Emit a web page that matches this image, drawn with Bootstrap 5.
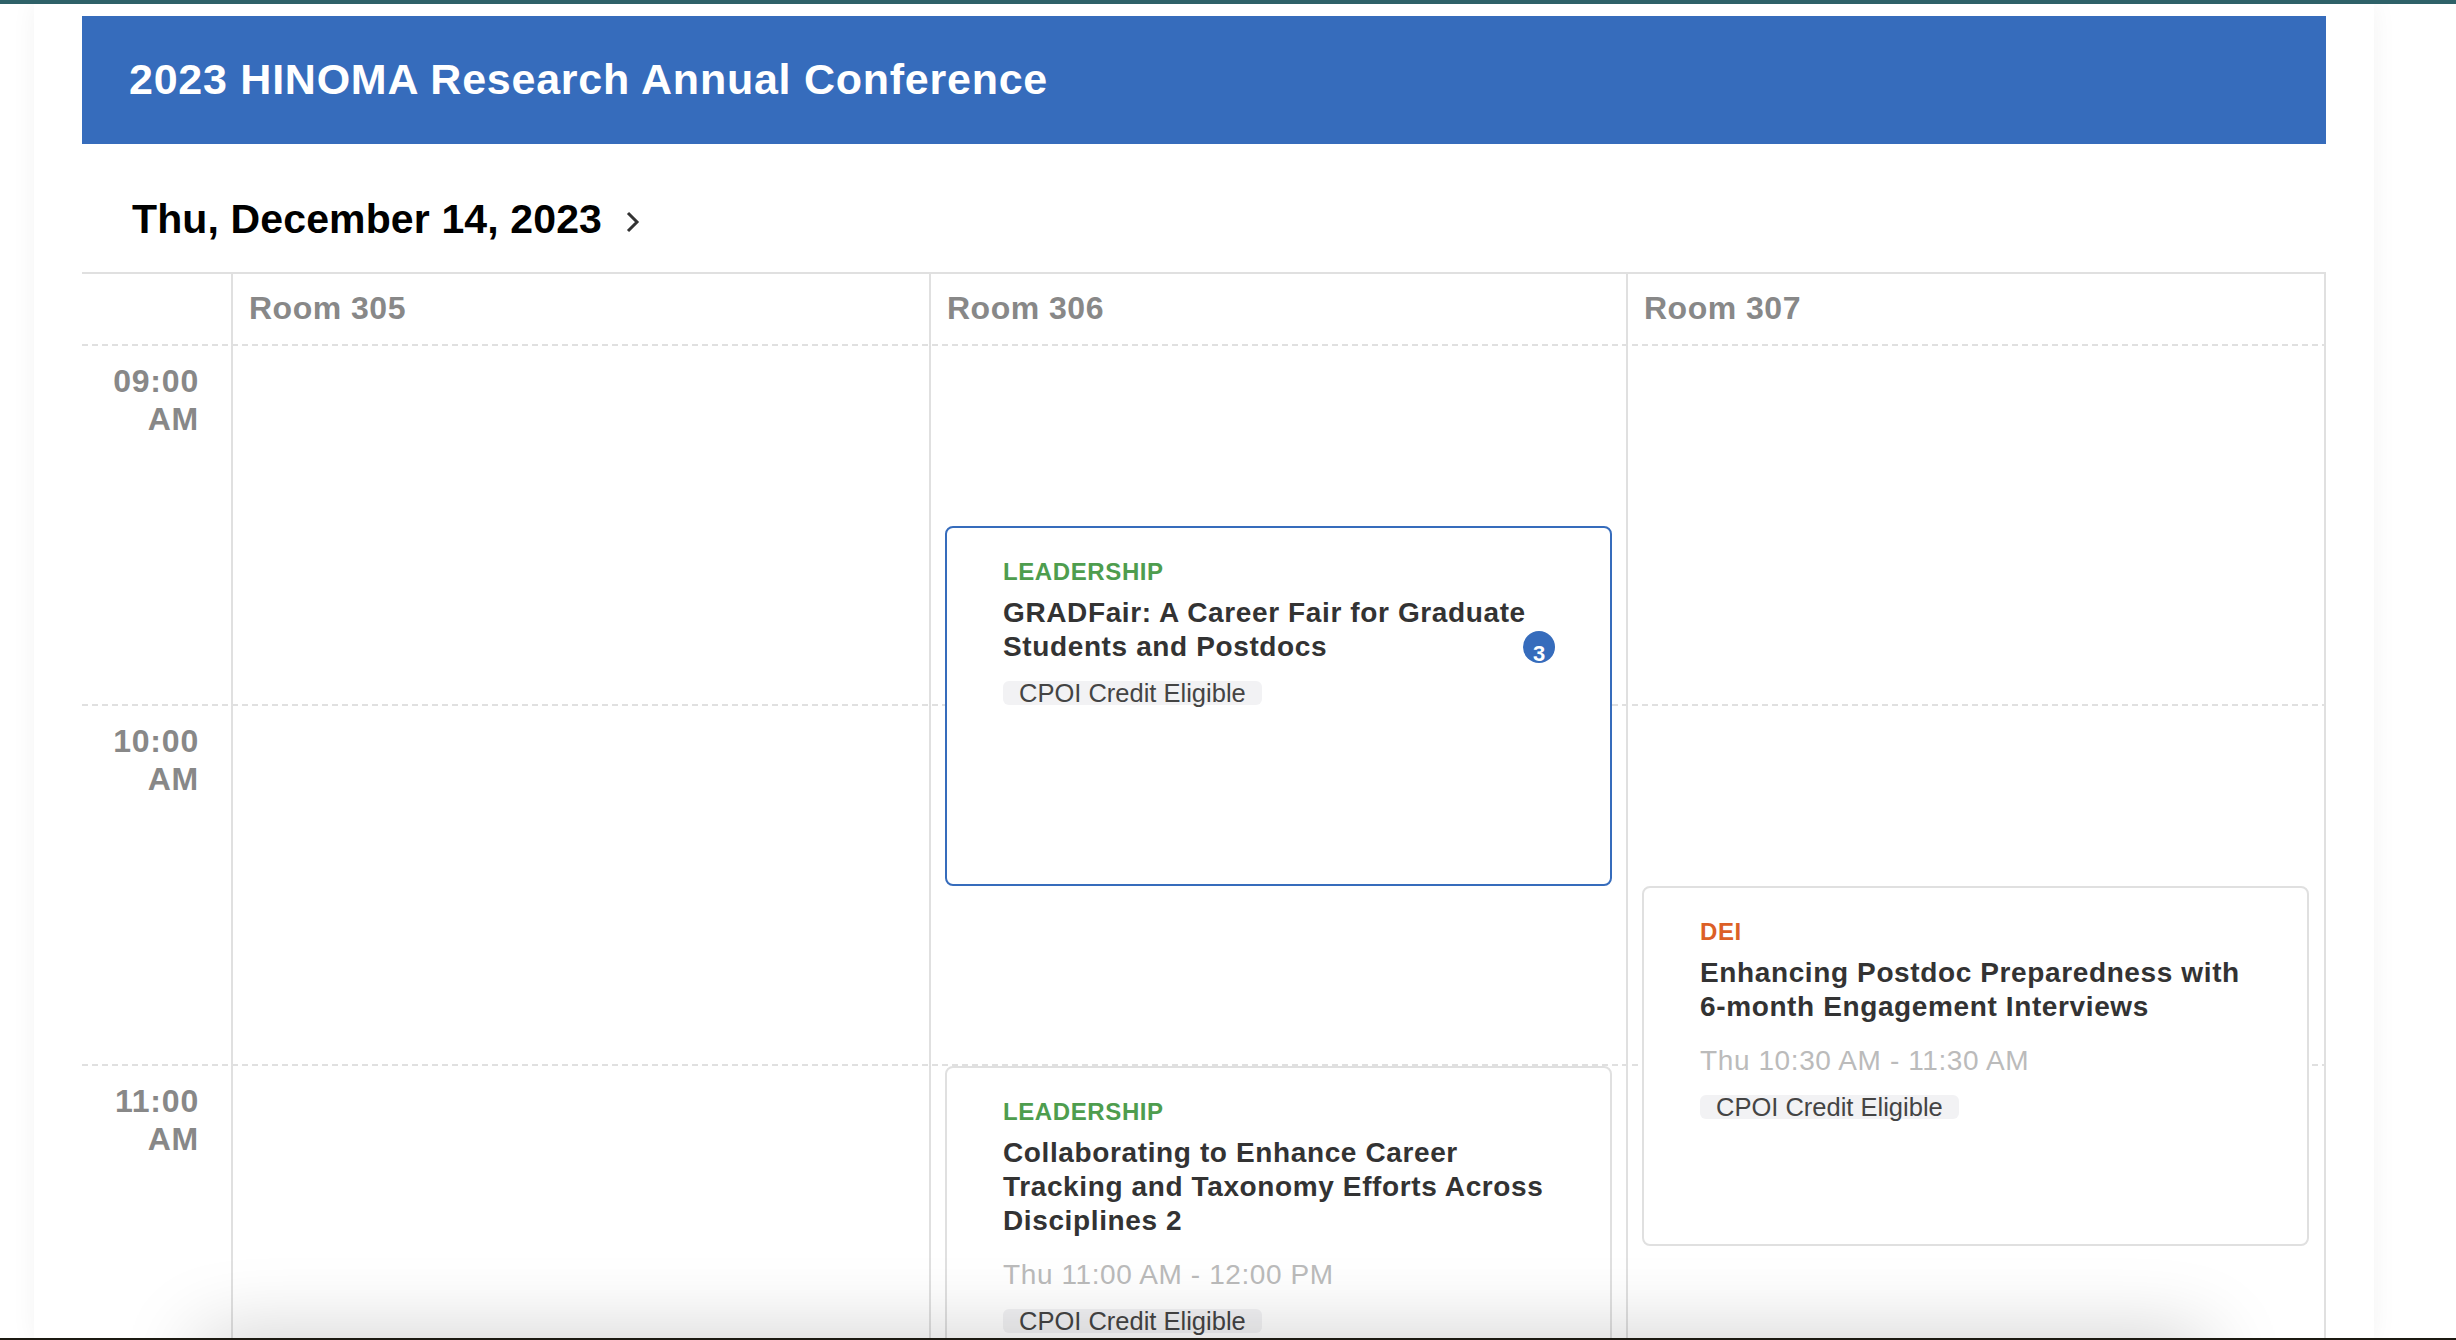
<!DOCTYPE html>
<html lang="en">
<head>
<meta charset="utf-8">
<title>2023 HINOMA Research Annual Conference</title>
<link rel="stylesheet" href="https://cdn.jsdelivr.net/npm/bootstrap@5.3.0/dist/css/bootstrap.min.css">
<style>
html,body{height:1340px;overflow:hidden;background:#fff;}
body{font-family:"Liberation Sans",Arial,sans-serif;position:relative;}
.topstrip{height:4px;background:#2e6168;position:relative;z-index:3;}
.sheet{margin:0 82px 0 34px;padding:12px 48px 0;background:#fff;box-shadow:0 0 24px rgba(0,0,0,.05);height:1336px;overflow:hidden;}
.banner{height:128px;background:#366cbc;color:#fff;padding:0 0 2px 47px;font-size:43px;font-weight:700;letter-spacing:.75px;}
.dayline{height:128px;padding:24px 0 0 50px;font-size:41px;font-weight:700;color:#000;letter-spacing:.13px;}
.dayline svg{margin-left:24px;margin-top:4px;}
.cal{display:grid;grid-template-columns:149px 698px 697px 1fr;grid-template-rows:70px repeat(6,180px);border-top:2px solid #e0e0e0;width:2244px;}
.rule{grid-column:1/-1;height:2px;background:repeating-linear-gradient(90deg,#e0e0e0 0 6px,transparent 6px 10px);align-self:start;}
.roomcol{grid-row:1/-1;border-left:2px solid #e0e0e0;}
.roomcol.endcol{border-right:2px solid #e0e0e0;}
.roomname{grid-row:1;padding:15px 0 0 18px;font-size:32px;line-height:38px;font-weight:700;color:#888;letter-spacing:.5px;}
.hourcell{grid-column:1;grid-row-end:span 2;padding:18px 32px 0 0;text-align:right;font-size:32px;line-height:38px;font-weight:700;color:#888;letter-spacing:.8px;}
.evt{position:relative;z-index:1;grid-row-end:span 2;width:667px;margin:2px 0 -2px 16px;padding:29px 56px 0;background:#fff;border:2px solid #e0e0e0;border-radius:8px;}
.evt.chosen{border-color:#366cbc;}
.evt-tag{font-size:24px;line-height:30px;font-weight:700;letter-spacing:.6px;}
.tag-green{color:#4e9d4e;}
.tag-orange{color:#dc5f26;}
.evt-title{margin-top:9px;font-size:28px;line-height:34px;font-weight:700;color:#333;letter-spacing:.62px;}
.evt-time{margin-top:20px;font-size:28px;line-height:34px;color:#bbb;letter-spacing:.6px;}
.evt-chip{display:inline-block;margin-top:17px;padding:0 16px;height:24px;line-height:24px;font-size:25.5px;color:#444;background:#f2f2f4;border-radius:6px;}
.evt-count{position:absolute;top:103px;right:55px;width:32px;height:32px;border-radius:50%;overflow:hidden;background:#366cbc;color:#fff;font-size:22px;font-weight:700;line-height:46px;text-align:center;}
.floor{position:absolute;left:200px;right:250px;top:1338px;height:60px;box-shadow:0 0 80px rgba(0,0,0,.22);z-index:4;pointer-events:none;}
.floorline{position:absolute;left:0;right:0;top:1338px;height:2px;background:#1c1a12;z-index:5;}
</style>
</head>
<body>
<div class="topstrip"></div>
<div class="sheet">
  <div class="banner d-flex align-items-center">2023 HINOMA Research Annual Conference</div>
  <div class="dayline d-flex align-items-center">Thu, December 14, 2023
    <svg width="14" height="22" viewBox="0 0 14 22" fill="none" stroke="#333" stroke-width="3"><path d="M2 2l9 9-9 9"/></svg>
  </div>
  <div class="cal">
    <div class="rule" style="grid-row:2"></div>
    <div class="rule" style="grid-row:4"></div>
    <div class="rule" style="grid-row:6"></div>
    <div class="roomcol" style="grid-column:2"></div>
    <div class="roomcol" style="grid-column:3"></div>
    <div class="roomcol endcol" style="grid-column:4"></div>
    <div class="roomname" style="grid-column:2">Room 305</div>
    <div class="roomname" style="grid-column:3">Room 306</div>
    <div class="roomname" style="grid-column:4">Room 307</div>
    <div class="hourcell" style="grid-row-start:2">09:00<br>AM</div>
    <div class="hourcell" style="grid-row-start:4">10:00<br>AM</div>
    <div class="hourcell" style="grid-row-start:6">11:00<br>AM</div>

    <div class="evt chosen" style="grid-column:3;grid-row-start:3">
      <div class="evt-tag tag-green">LEADERSHIP</div>
      <div class="evt-title">GRADFair: A Career Fair for Graduate Students and Postdocs</div>
      <div class="evt-chip">CPOI Credit Eligible</div>
      <div class="evt-count">3</div>
    </div>
    <div class="evt" style="grid-column:4;grid-row-start:5">
      <div class="evt-tag tag-orange">DEI</div>
      <div class="evt-title">Enhancing Postdoc Preparedness with 6-month Engagement Interviews</div>
      <div class="evt-time">Thu 10:30 AM - 11:30 AM</div>
      <div class="evt-chip">CPOI Credit Eligible</div>
    </div>
    <div class="evt" style="grid-column:3;grid-row-start:6">
      <div class="evt-tag tag-green">LEADERSHIP</div>
      <div class="evt-title">Collaborating to Enhance Career Tracking and Taxonomy Efforts Across Disciplines 2</div>
      <div class="evt-time">Thu 11:00 AM - 12:00 PM</div>
      <div class="evt-chip">CPOI Credit Eligible</div>
    </div>
  </div>
</div>
<div class="floor"></div>
<div class="floorline"></div>
<script src="https://cdn.jsdelivr.net/npm/bootstrap@5.3.0/dist/js/bootstrap.bundle.min.js"></script>
</body>
</html>
